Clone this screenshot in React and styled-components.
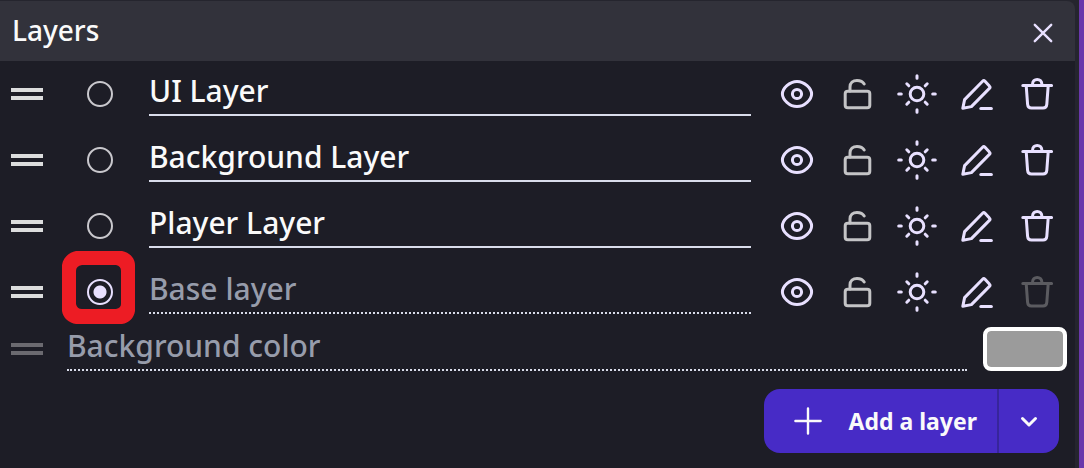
import React, { useState } from 'react'
import styled, { createGlobalStyle } from 'styled-components';

const initialLayers = [
    { id: 'ui', name: 'UI Layer' },
    { id: 'background', name: 'Background Layer' },
    { id: 'player', name: 'Player Layer' },
    { id: 'base', name: 'Base layer', base: true },
];

const EyeIcon = () => (
    <Icon viewBox="0 0 40 40">
        <path d="M5.4 20C5.4 14.5 12.5 7.4 20 7.4S34.6 14.5 34.6 20 27.5 32.6 20 32.6 5.4 25.5 5.4 20Z" />
        <circle cx="20" cy="20" r="4.6" />
    </Icon>
)

const LockIcon = () => (
    <Icon viewBox="0 0 40 40">
        <rect x="8.2" y="17.2" width="24.6" height="16.6" rx="2.6" />
        <path d="M13 17V13C13 9 16 6.4 20 6.4C23.4 6.4 25.8 7.6 27.2 10" />
    </Icon>
)

const SunIcon = () => (
    <Icon viewBox="0 0 40 40">
        <circle cx="20" cy="20" r="6.8" />
        <path d="M20 1.7V4.3M20 35.7V38.3M1.7 20H4.3M35.7 20H38.3M9.8 9.8L11.8 11.8M28.2 28.2L30.2 30.2M9.8 30.2L11.8 28.2M28.2 11.8L30.2 9.8" />
    </Icon>
)

const PencilIcon = () => (
    <Icon viewBox="0 0 40 40">
        <path d="M5.8 34.2L7.6 25.6L25.6 7.2Q26.8 6 28 7.2L32.4 12Q33.6 13.2 32.4 14.4L14.4 32.6Z" />
        <path d="M23.8 34.4H34.4" />
    </Icon>
)

const TrashIcon = () => (
    <Icon viewBox="0 0 40 40">
        <path d="M5.8 11.4H34.6M15.6 11V9.8C15.6 7.2 17.6 5.4 20.2 5.4S24.8 7.2 24.8 9.8V11" />
        <path d="M9.2 11.6L10.6 30.4Q10.9 34 14.4 34H26Q29.5 34 29.8 30.4L31.2 11.6" />
    </Icon>
)

function LayerRow({ layer, active, onSelect, onRename }) {
    return (
        <Row>
            <Handle />
            <RadioCell>
                <Radio
                    type="radio"
                    name="active-layer"
                    aria-label={layer.name}
                    checked={active}
                    onChange={onSelect}
                />
                {active && (
                    <Marker viewBox="0 0 74 74">
                        <path
                            fillRule="evenodd"
                            d="M14 0H60C67 1 73 7 73 14V60C72 67 67 72 60 73H14C7 72 1 67 0 60V14C1 7 7 1 14 0ZM20 14Q14 15 14 20V53Q15 58 20 58H54Q59 57 59 53V20Q59 15 54 14Z"
                        />
                    </Marker>
                )}
            </RadioCell>
            <NameInput
                aria-label="Layer name"
                value={layer.name}
                disabled={layer.base}
                onChange={(e) => onRename(e.target.value)}
            />
            <Actions>
                <IconButton aria-label="Visible"><EyeIcon /></IconButton>
                <IconButton aria-label="Lock" $color="#c4c4c6"><LockIcon /></IconButton>
                <IconButton aria-label="Lighting"><SunIcon /></IconButton>
                <IconButton aria-label="Edit"><PencilIcon /></IconButton>
                <IconButton aria-label="Delete" disabled={layer.base}><TrashIcon /></IconButton>
            </Actions>
        </Row>
    )
}

function App() {
    const [layers, setLayers] = useState(initialLayers);
    const [active, setActive] = useState('base');
    const [color, setColor] = useState('#9b9b9b');

    const rename = (id, name) => {
        setLayers(layers.map((layer) => layer.id === id ? { ...layer, name } : layer));
    }

    return (
        <Page>
            <GlobalStyle />
            <Panel>
                <Header>
                    <Title>Layers</Title>
                    <CloseButton aria-label="Close">
                        <Icon viewBox="0 0 40 40">
                            <path d="M11.8 11.8L28.2 28.2M28.2 11.8L11.8 28.2" />
                        </Icon>
                    </CloseButton>
                </Header>
                {layers.map((layer) => (
                    <LayerRow
                        key={layer.id}
                        layer={layer}
                        active={layer.id === active}
                        onSelect={() => setActive(layer.id)}
                        onRename={(name) => rename(layer.id, name)}
                    />
                ))}
                <ColorRow>
                    <Handle $disabled />
                    <ColorLabel htmlFor="background-color">Background color</ColorLabel>
                    <Swatch
                        id="background-color"
                        type="color"
                        value={color}
                        onChange={(e) => setColor(e.target.value)}
                    />
                </ColorRow>
                <Footer>
                    <AddButton>
                        <Icon viewBox="0 0 40 40">
                            <path d="M20 7.4V32.6M7.4 20H32.6" />
                        </Icon>
                        <span>Add a layer</span>
                    </AddButton>
                    <MoreButton aria-label="More options">
                        <Icon viewBox="0 0 40 40">
                            <path d="M13.5 17.5L20 24L26.5 17.5" />
                        </Icon>
                    </MoreButton>
                </Footer>
            </Panel>
        </Page>
    )
}

export default App

const GlobalStyle = createGlobalStyle`
    * {
        box-sizing: border-box;
    }

    body {
        margin: 0;
        background: #1d1d26;
        font-family: "Noto Sans", sans-serif;
    }

    button, input {
        font-family: inherit;
    }
`

const Page = styled.div`
    min-height: 100vh;
    display: flex;
    padding-right: 5px;
    background: #6a37ab;
`

const Panel = styled.main`
    flex: 1;
    min-width: 0;
    border-top: 1px solid #25252e;
    border-right: 4px solid #25252e;
    background: linear-gradient(#25252e 20px, #1d1d26 20px);
`

const Header = styled.header`
    height: 60px;
    padding: 4px 12px 0;
    display: flex;
    align-items: center;
    justify-content: space-between;
    background: #32323b;
    border-top-right-radius: 8px;
`

const Title = styled.h1`
    margin: 0;
    padding-bottom: 6px;
    font-size: 28px;
    font-weight: 500;
    line-height: 40px;
    color: #fafafa;
`

const Icon = styled.svg`
    width: 40px;
    height: 40px;
    flex: none;
    display: block;
    overflow: visible;
    fill: none;
    stroke: currentColor;
    stroke-width: 3;
    stroke-linecap: round;
    stroke-linejoin: round;
`

const IconButton = styled.button`
    width: 60px;
    height: 60px;
    padding: 0;
    border: none;
    background: none;
    display: flex;
    align-items: center;
    justify-content: center;
    color: ${(props) => props.$color || '#e8e0ff'};
    cursor: pointer;

    &:disabled {
        color: #5b5b60;
        cursor: default;
    }
`

const CloseButton = styled(IconButton)`
    width: 40px;
    height: 40px;

    svg {
        stroke-width: 2.4;
    }
`

const Row = styled.div`
    height: 66px;
    padding: 0 8px 0 11px;
    display: flex;
    align-items: center;
`

const Handle = styled.div`
    width: 32px;
    height: 12px;
    flex: none;
    border: solid ${(props) => props.$disabled ? '#6b6a70' : '#dcdddd'};
    border-width: 4px 0;
`

const RadioCell = styled.div`
    position: relative;
    width: 74px;
    margin: 0 12px 0 20px;
    flex: none;
    display: flex;
    align-items: center;
    justify-content: center;
`

const Radio = styled.input`
    appearance: none;
    width: 26px;
    height: 26px;
    margin: 0;
    border: 2px solid #c9c8cd;
    border-radius: 50%;
    cursor: pointer;

    &:checked {
        border-color: #e8e0ff;
        background: radial-gradient(circle, #e8e0ff 6px, transparent 7px);
    }
`

const Marker = styled.svg`
    position: absolute;
    left: -1px;
    top: 50%;
    width: 74px;
    height: 74px;
    margin-top: -41px;
    fill: #ed1c24;
    pointer-events: none;
`

const NameInput = styled.input`
    flex: 1;
    min-width: 0;
    height: 44px;
    padding: 0 0 6px;
    border: none;
    border-bottom: 2px solid #d9dcea;
    border-radius: 0;
    outline: none;
    background: none;
    font-size: 30px;
    font-weight: 500;
    color: #fafafa;

    &:disabled {
        border-bottom-style: dotted;
        color: #979cab;
    }
`

const Actions = styled.div`
    display: flex;
    margin-left: 16px;
`

const ColorRow = styled(Row)`
    height: 48px;
`

const ColorLabel = styled.label`
    flex: 1;
    height: 44px;
    margin: 0 16px 0 24px;
    border-bottom: 2px dotted #d9dcea;
    font-size: 30px;
    font-weight: 500;
    line-height: 38px;
    color: #979cab;
`

const Swatch = styled.input`
    appearance: none;
    width: 84px;
    height: 44px;
    padding: 0;
    border: 4px solid #ffffff;
    border-radius: 8px;
    background: #ffffff;
    cursor: pointer;

    &::-webkit-color-swatch-wrapper {
        padding: 0;
    }

    &::-webkit-color-swatch {
        border: none;
        border-radius: 4px;
    }
`

const Footer = styled.footer`
    padding: 16px 16px 14px;
    display: flex;
    justify-content: flex-end;
`

const AddButton = styled.button`
    height: 64px;
    padding: 0 20px 0 24px;
    border: none;
    border-right: 2px solid #37259b;
    border-radius: 16px 0 0 16px;
    display: flex;
    align-items: center;
    gap: 20px;
    background: #472bc6;
    font-size: 23px;
    font-weight: 700;
    line-height: 32px;
    color: #fafafa;
    cursor: pointer;

    svg {
        stroke-width: 2.4;
    }
`

const MoreButton = styled(AddButton)`
    width: 60px;
    padding: 0 10px;
    border-right: none;
    border-radius: 0 16px 16px 0;

    svg {
        stroke-width: 3;
    }
`
